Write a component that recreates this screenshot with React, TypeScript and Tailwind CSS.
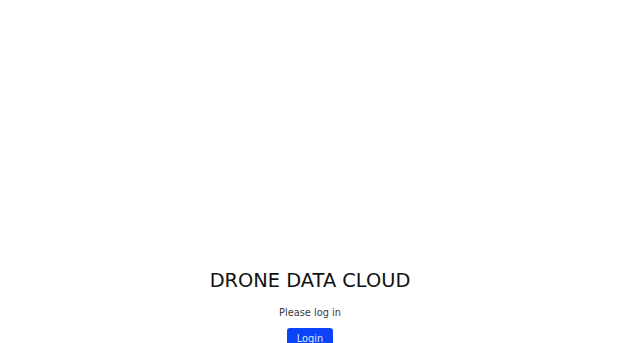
export default function App() {
  return (
    <div className="min-h-screen bg-white font-['DejaVu_Sans',sans-serif] text-[#111]">
      <div className="flex flex-col items-center pt-[269px] text-center">
        <h1 className="text-[19.4px] leading-[1.2] font-normal">DRONE DATA CLOUD</h1>
        <p className="mt-[14px] text-[9.8px] leading-[1.5] text-[#3a3a3a]">Please log in</p>
        <button className="mt-[7px] rounded-[3px] bg-[#0b44f6] px-[9.5px] py-[4.3px] text-[9.8px] leading-[1.5] text-[#dfe7ff]">
          Login
        </button>
      </div>
    </div>
  );
}
